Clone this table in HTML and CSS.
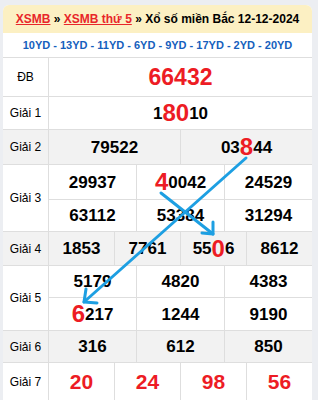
FILE: index.html
```html
<!DOCTYPE html>
<html lang="vi">
<head>
<meta charset="utf-8">
<title>XSMB 12-12-2024</title>
<link rel="stylesheet" href="styles.css">
</head>
<body>
<div class="wrap">
  <div class="head"><a href="#">XSMB</a>&nbsp;»&nbsp;<a href="#">XSMB thứ 5</a>&nbsp;» Xổ số miền Bắc 12-12-2024</div>
  <div class="yd">10YD - 13YD - 11YD - 6YD - 9YD - 17YD - 2YD - 20YD</div>

  <div class="row r-db">
    <div class="lbl">ĐB</div>
    <div class="nums c1"><div class="c db">66432</div></div>
  </div>
  <div class="row r-1">
    <div class="lbl">Giải 1</div>
    <div class="nums c1"><div class="c">1<b class="hi">80</b>10</div></div>
  </div>
  <div class="row r-2 alt">
    <div class="lbl">Giải 2</div>
    <div class="nums c2"><div class="c">79522</div><div class="c">03<b class="hi">8</b>44</div></div>
  </div>
  <div class="row r-3">
    <div class="lbl">Giải 3</div>
    <div class="nums c3">
      <div class="c">29937</div><div class="c"><b class="hi">4</b>0042</div><div class="c">24529</div>
      <div class="c">63112</div><div class="c">53384</div><div class="c">31294</div>
    </div>
  </div>
  <div class="row r-4 alt">
    <div class="lbl">Giải 4</div>
    <div class="nums c4">
      <div class="c">1853</div><div class="c">7761</div><div class="c">55<b class="hi">0</b>6</div><div class="c">8612</div>
    </div>
  </div>
  <div class="row r-5">
    <div class="lbl">Giải 5</div>
    <div class="nums c3">
      <div class="c">5179</div><div class="c">4820</div><div class="c">4383</div>
      <div class="c"><b class="hi">6</b>217</div><div class="c">1244</div><div class="c">9190</div>
    </div>
  </div>
  <div class="row r-6 alt">
    <div class="lbl">Giải 6</div>
    <div class="nums c3">
      <div class="c">316</div><div class="c">612</div><div class="c">850</div>
    </div>
  </div>
  <div class="row r-7">
    <div class="lbl">Giải 7</div>
    <div class="nums c4">
      <div class="c g7">20</div><div class="c g7">24</div><div class="c g7">98</div><div class="c g7">56</div>
    </div>
  </div>
</div>
<svg class="arrows" width="318" height="400" viewBox="0 0 318 400">
  <g fill="none" stroke="#1d9fe2" stroke-width="3" stroke-linecap="round" stroke-linejoin="round">
    <path d="M246 158 L84 302"/>
    <path d="M86 289 L84 302 L97 303"/>
    <path d="M161 193 L213 234"/>
    <path d="M213 222 L213 234 L202 233"/>
  </g>
</svg>
</body>
</html>
```
FILE: styles.css
```css
body {
  margin: 0;
  background: #eceef2;
  font-family: "Liberation Sans", Arial, sans-serif;
  color: #000;
}
.wrap {
  margin: 5px 6px 0 3px;
  background: #fff;
  border-radius: 6px 6px 0 0;
  overflow: hidden;
}
.head {
  height: 28px;
  background: #fcf0c3;
  display: flex;
  align-items: center;
  justify-content: center;
  font-size: 12px;
  font-weight: bold;
  white-space: nowrap;
}
.head a {
  color: #e8262a;
  text-decoration: underline;
}
.yd {
  height: 24px;
  border-bottom: 1px solid #dedede;
  display: flex;
  align-items: center;
  justify-content: center;
  color: #1560bd;
  font-size: 11px;
  font-weight: bold;
  white-space: nowrap;
}
.row {
  display: flex;
  border-bottom: 1px solid #dedede;
}
.lbl {
  width: 45px;
  flex: none;
  border-right: 1px solid #dedede;
  display: flex;
  align-items: center;
  justify-content: center;
  font-size: 12px;
}
.nums {
  flex: 1;
  display: grid;
  gap: 1px;
  background: #dedede;
}
.c1 { grid-template-columns: 1fr; }
.c2 { grid-template-columns: repeat(2, 1fr); }
.c3 { grid-template-columns: repeat(3, 1fr); }
.c4 { grid-template-columns: repeat(4, 1fr); }
.c {
  background: #fff;
  display: flex;
  align-items: baseline;
  justify-content: center;
  font-size: 17px;
  font-weight: bold;
  line-height: 1;
  padding-top: 0;
}
.alt .lbl, .alt .c { background: #f2f2f2; }
.c { align-items: center; }
.hi {
  color: #ed1c24;
  font-size: 24px;
  font-weight: bold;
}
.db {
  color: #ed1c24;
  font-size: 23px;
}
.g7 {
  color: #ed1c24;
  font-size: 21px;
}
.r-db { height: 38px; }
.r-1 { height: 32px; }
.r-2 { height: 34px; }
.r-3 .nums { grid-template-rows: 34px 31px; }
.r-4 { height: 33px; }
.r-5 .nums { grid-template-rows: 31px 32px; }
.r-6 { height: 31px; }
.r-7 { height: 37px; }
.arrows {
  position: absolute;
  top: 0;
  left: 0;
  pointer-events: none;
}
```
